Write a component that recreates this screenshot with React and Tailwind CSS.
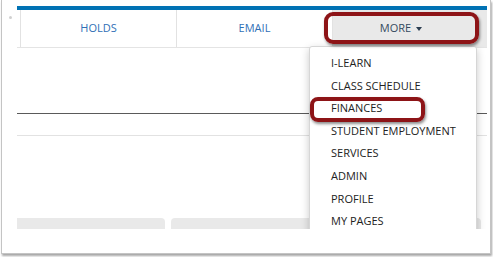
const items = [
  "I-LEARN",
  "CLASS SCHEDULE",
  "FINANCES",
  "STUDENT EMPLOYMENT",
  "SERVICES",
  "ADMIN",
  "PROFILE",
  "MY PAGES",
];

export default function App() {
  return (
    <div className="relative w-[493px] h-[257px] bg-white overflow-hidden font-['Open_Sans',sans-serif]">
      {/* screenshot frame */}
      <div className="ml-[1px] w-[490px] h-[254px] bg-white border-l border-r border-b border-[#c4c4c4] shadow-[1px_2px_2px_rgba(0,0,0,0.35)]">
        <div className="absolute left-[9px] top-[16px] w-[3px] h-[3px] rounded-full bg-[#d0d0d0]" />

        <div className="relative ml-[15px] pt-[6px] w-[470px] h-[229px] overflow-hidden">
          <div className="h-[4px] bg-[#0072b4]" />

          {/* tab row */}
          <div className="flex h-[38px] border-b border-[#e4e4e4] text-[11px]">
            <div className="w-[4px] border-r border-[#e2e2e2]" />
            <div className="w-[156px] border-r border-[#e2e2e2] flex items-center justify-center text-[#2f6fb6]">
              HOLDS
            </div>
            <div className="w-[156px] border-r border-[#e2e2e2] flex items-center justify-center text-[#2f6fb6]">
              EMAIL
            </div>
            <div className="flex-1 bg-[#e9e9e9] flex items-center justify-center gap-[5px] pr-[18px] text-[#34495e]">
              <span>MORE</span>
              <span className="w-0 h-0 border-l-[3px] border-r-[3px] border-t-[4px] border-l-transparent border-r-transparent border-t-[#2b3d50]" />
            </div>
          </div>

          <div className="h-[66px] border-b border-[#5a5a5a]" />
          <div className="h-[22px] border-b border-[#e2e2e2]" />

          <div className="flex gap-[6px] mt-[82px]">
            <div className="w-[148px] h-[12px] bg-[#e9e9e9] rounded-tr-[4px]" />
            <div className="w-[310px] h-[12px] bg-[#e9e9e9] rounded-t-[4px]" />
          </div>

          {/* dropdown */}
          <div className="absolute left-[292px] top-[46px] w-[168px] h-[200px] bg-white border border-[#d6d6d6] rounded-[3px] shadow-[0_3px_8px_rgba(0,0,0,0.22)] pt-[5px]">
            {items.map((item) => (
              <div
                key={item}
                className="h-[22.6px] flex items-center pl-[21px] text-[11px] text-[#222]"
              >
                {item}
              </div>
            ))}
          </div>
        </div>
      </div>

      {/* annotations */}
      <div className="absolute left-[324px] top-[12px] w-[155px] h-[32px] border-[4px] border-[#8d1417] rounded-[9px] shadow-[1px_2px_3px_rgba(0,0,0,0.45)]" />
      <div className="absolute left-[310px] top-[97px] w-[115px] h-[25px] border-[4px] border-[#8d1417] rounded-[8px] shadow-[1px_2px_3px_rgba(0,0,0,0.45)]" />
    </div>
  );
}
